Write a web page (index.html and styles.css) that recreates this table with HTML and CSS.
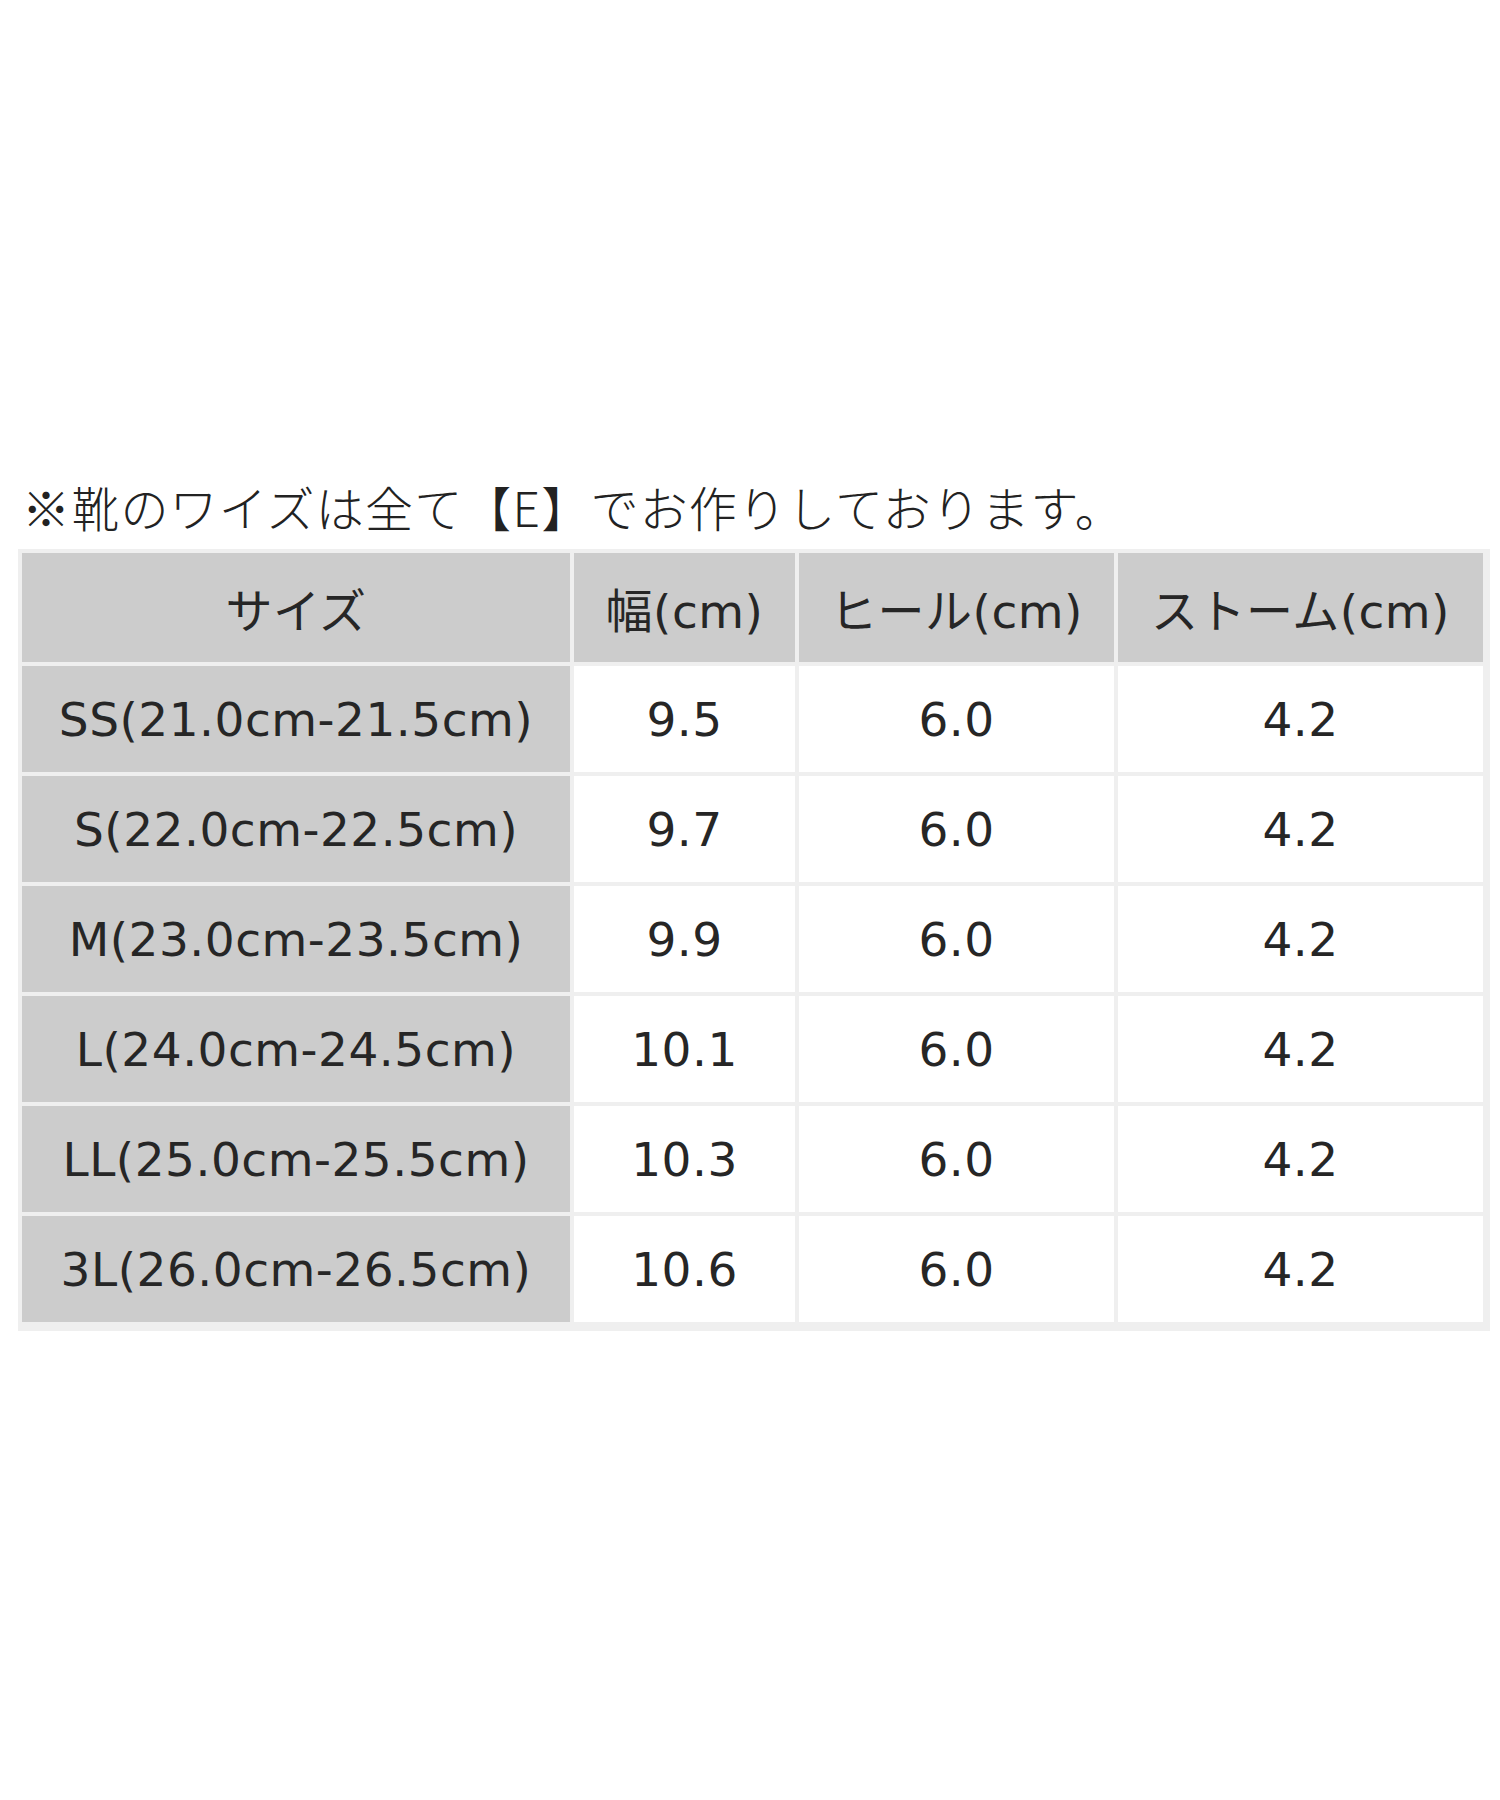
FILE: index.html
```html
<!DOCTYPE html>
<html lang="ja">
<head>
<meta charset="utf-8">
<title>サイズ表</title>
<link rel="stylesheet" href="styles.css">
</head>
<body>
<div class="page">
  <p class="note">※靴のワイズは全て【E】でお作りしております。</p>
  <div class="table-wrap">
    <table class="size-table">
      <colgroup>
        <col class="c-size">
        <col class="c-width">
        <col class="c-heel">
        <col class="c-storm">
      </colgroup>
      <thead>
        <tr>
          <th class="hd">サイズ</th>
          <th class="hd">幅(cm)</th>
          <th class="hd">ヒール(cm)</th>
          <th class="hd">ストーム(cm)</th>
        </tr>
      </thead>
      <tbody>
        <tr><th class="sz">SS(21.0cm-21.5cm)</th><td>9.5</td><td>6.0</td><td>4.2</td></tr>
        <tr><th class="sz">S(22.0cm-22.5cm)</th><td>9.7</td><td>6.0</td><td>4.2</td></tr>
        <tr><th class="sz">M(23.0cm-23.5cm)</th><td>9.9</td><td>6.0</td><td>4.2</td></tr>
        <tr><th class="sz">L(24.0cm-24.5cm)</th><td>10.1</td><td>6.0</td><td>4.2</td></tr>
        <tr><th class="sz">LL(25.0cm-25.5cm)</th><td>10.3</td><td>6.0</td><td>4.2</td></tr>
        <tr><th class="sz">3L(26.0cm-26.5cm)</th><td>10.6</td><td>6.0</td><td>4.2</td></tr>
      </tbody>
    </table>
  </div>
</div>
</body>
</html>
```

FILE: styles.css
```css
html, body {
  margin: 0;
  padding: 0;
  background: #ffffff;
}

body {
  font-family: "DejaVu Sans", "Noto Sans CJK JP", sans-serif;
  color: #262626;
}

.page {
  padding: 476px 0 0 18px;
}

.note {
  margin: 0 0 13px 4px;
  font-family: "Noto Sans CJK JP", sans-serif;
  font-size: 48px;
  font-weight: 300;
  line-height: 60px;
  letter-spacing: 1.2px;
  color: #222222;
  white-space: nowrap;
}

.table-wrap {
  display: inline-block;
  background: #efefef;
  padding: 0 3px 5px 0;
}

.size-table {
  border-collapse: separate;
  border-spacing: 4px;
  table-layout: fixed;
  width: 1469px;
  background: #efefef;
}

.c-size { width: 548px; }
.c-width { width: 221px; }
.c-heel { width: 315px; }
.c-storm { width: 365px; }

.size-table th,
.size-table td {
  padding: 0;
  text-align: center;
  vertical-align: middle;
  font-weight: 400;
  font-size: 47px;
  letter-spacing: 0.5px;
  white-space: nowrap;
}

.size-table thead th {
  height: 109px;
}

.size-table tbody th,
.size-table tbody td {
  height: 106px;
}

.hd {
  background: #cccccc;
  letter-spacing: 1px;
}

.sz {
  background: #cccccc;
}

.size-table td {
  background: #ffffff;
}
```
